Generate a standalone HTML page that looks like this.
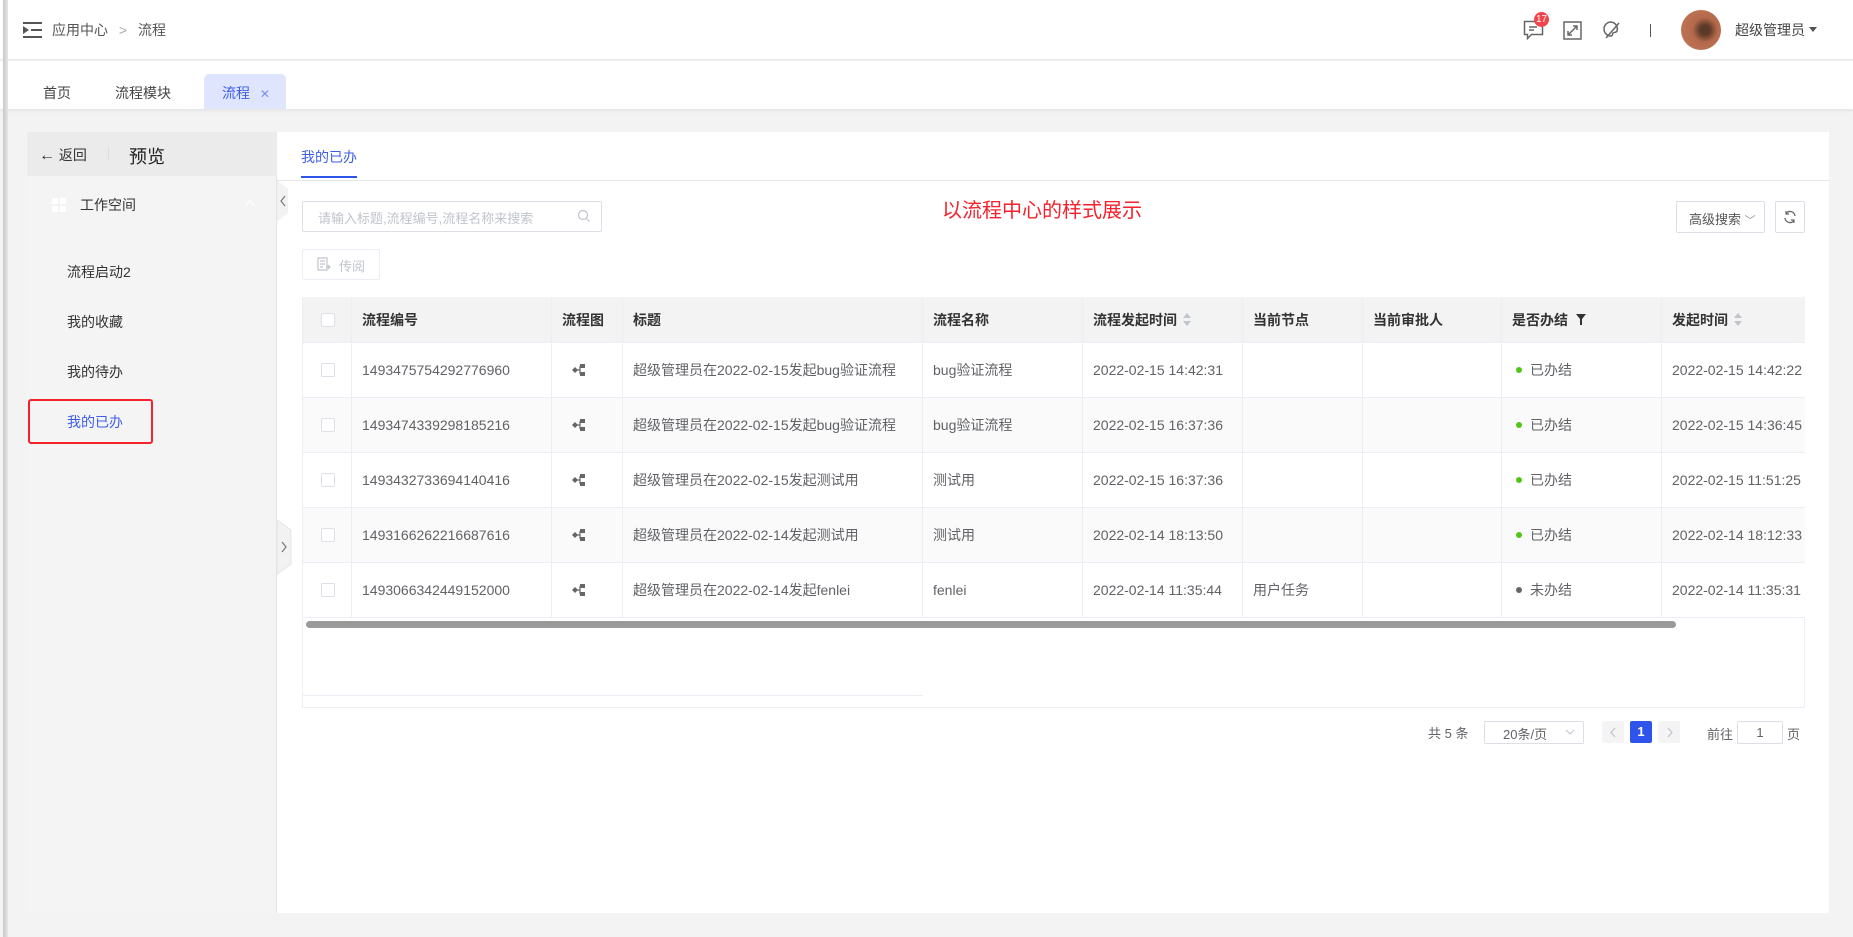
<!DOCTYPE html>
<html><head><meta charset="utf-8"><style>
*{margin:0;padding:0;box-sizing:border-box}
body{width:1853px;height:937px;overflow:hidden;background:#f3f3f3;font-family:"Liberation Sans","Noto Sans CJK SC",sans-serif;font-size:14px;color:#555;position:relative}
.a{position:absolute}
.hdr{left:0;top:0;width:1853px;height:60px;background:#fff;border-bottom:1px solid #e8e8e8}
.tabs{left:0;top:61px;width:1853px;height:48px;background:#fff;box-shadow:0 2px 3px rgba(0,0,0,.06)}
.strip{left:3px;top:0;width:5px;height:937px;background:linear-gradient(90deg,#c8c8cc,#e6e6e8)}
.side{left:27px;top:132px;width:250px;height:781px;background:#f4f4f4;border-right:1px solid #e4e4e4}
.main{left:277px;top:132px;width:1552px;height:781px;background:#fff}
.t{white-space:nowrap}
.th,.td{position:absolute;display:flex;align-items:center;padding-left:10px;border-right:1px solid #ebeef5;border-bottom:1px solid #ebeef5;white-space:nowrap}
.th{background:#f3f3f3;color:#333;font-weight:bold;height:46px;top:297px}
.td{height:55px;color:#606266}
.cb{width:14px;height:14px;border:1px solid #dcdfe6;border-radius:2px;background:#fff}
.dot{display:inline-block;width:6px;height:6px;border-radius:50%;background:#52c41a;margin-right:8px}
.sort{display:inline-block;margin-left:6px;width:8px;height:14px;position:relative}
.sort:before{content:"";position:absolute;left:0;top:0;border:4px solid transparent;border-bottom:5px solid #c0c4cc;border-top:0}
.sort:after{content:"";position:absolute;left:0;top:8px;border:4px solid transparent;border-top:5px solid #c0c4cc;border-bottom:0}
</style></head><body>
<div class="a hdr"></div>
<div class="a tabs"></div>
<div class="a strip"></div>
<svg class="a" style="left:23px;top:22px" width="19" height="16" viewBox="0 0 19 16"><rect x="0" y="0" width="19" height="2" fill="#555"/><rect x="0" y="14" width="19" height="2" fill="#555"/><rect x="8" y="7" width="11" height="2" fill="#555"/><path d="M0 4 L6 8 L0 12Z" fill="#555"/></svg>
<div class="a t" style="left:52px;top:20px;color:#555;font-size:14px">应用中心 <span style="color:#aaa;margin:0 7px">&gt;</span> 流程</div>
<svg class="a" style="left:1523px;top:20px" width="21" height="20" viewBox="0 0 21 20"><path d="M1.5 1.5h18v13h-11l-4 4v-4h-3z" fill="none" stroke="#666" stroke-width="1.5"/><path d="M6 7h8M6 10h5" stroke="#666" stroke-width="1.5"/></svg>
<div class="a" style="left:1534px;top:12px;width:15px;height:15px;border-radius:50%;background:#f0464b;color:#fff;font-size:10px;text-align:center;line-height:15px">17</div>
<svg class="a" style="left:1563px;top:21px" width="19" height="19" viewBox="0 0 19 19"><rect x="1" y="1" width="17" height="17" fill="none" stroke="#666" stroke-width="1.5"/><path d="M5 14l9-9M10 5h4v4M5 10v4h4" fill="none" stroke="#666" stroke-width="1.5"/></svg>
<svg class="a" style="left:1602px;top:20px" width="19" height="20" viewBox="0 0 19 20"><path d="M9 2a7 7 0 1 0 0 14c2 0 1-2 2-3s3 0 4-2a7 7 0 0 0-6-9z" fill="none" stroke="#666" stroke-width="1.5"/><path d="M4 18L17 3" stroke="#666" stroke-width="1.5"/></svg>
<div class="a" style="left:1650px;top:24px;width:1px;height:13px;background:#555"></div>
<div class="a" style="left:1681px;top:10px;width:40px;height:40px;border-radius:50%;background:radial-gradient(circle at 60% 50%,#5a3a28 0,#5a3a28 15%,#b5694a 40%,#c27a5a 100%)"></div>
<div class="a t" style="left:1735px;top:20px;color:#444;font-size:14px">超级管理员</div>
<div class="a" style="left:1809px;top:27px;border:4px solid transparent;border-top:5px solid #555"></div>
<div class="a t" style="left:43px;top:83px;color:#444">首页</div>
<div class="a t" style="left:115px;top:83px;color:#444">流程模块</div>
<div class="a" style="left:204px;top:74px;width:82px;height:35px;background:#dee5fc;border-radius:5px 5px 0 0"></div>
<div class="a t" style="left:222px;top:83px;color:#3f5ee8">流程 <span style="font-size:12px;color:#7a8fe8;margin-left:6px">✕</span></div>
<div class="a side"></div>
<div class="a" style="left:27px;top:132px;width:250px;height:44px;background:#ebebeb"></div>
<div class="a t" style="left:39px;top:145px;color:#333;font-size:14px"><span style="font-size:16px">←</span> 返回</div>
<div class="a" style="left:108px;top:147px;width:1px;height:14px;background:#ddd"></div>
<div class="a t" style="left:129px;top:143px;color:#222;font-size:18px">预览</div>
<svg class="a" style="left:52px;top:198px" width="14" height="14"><rect width="6" height="6" fill="#fff"/><rect x="8" width="6" height="6" fill="#fff"/><rect y="8" width="6" height="6" fill="#fff"/><rect x="8" y="8" width="6" height="6" fill="#fff"/></svg>
<div class="a t" style="left:80px;top:195px;color:#333">工作空间</div>
<svg class="a" style="left:244px;top:199px" width="12" height="8"><path d="M1 7l5-5 5 5" fill="none" stroke="#fff" stroke-width="1.2"/></svg>
<div class="a t" style="left:67px;top:262px;color:#333">流程启动2</div>
<div class="a t" style="left:67px;top:312px;color:#333">我的收藏</div>
<div class="a t" style="left:67px;top:362px;color:#333">我的待办</div>
<div class="a t" style="left:67px;top:412px;color:#3f5ee8">我的已办</div>
<div class="a" style="left:28px;top:399px;width:125px;height:45px;border:2px solid #f5222d;border-radius:3px"></div>
<div class="a main"></div>
<div class="a" style="left:277px;top:180px;width:1552px;height:1px;background:#e4e7ed"></div>
<div class="a t" style="left:301px;top:147px;color:#3f5ee8">我的已办</div>
<div class="a" style="left:301px;top:176px;width:56px;height:2px;background:#2f54eb"></div>
<svg class="a" style="left:277px;top:181px" width="12" height="40"><path d="M0 0h1l10 8v24L1 40H0z" fill="#f2f2f2"/><path d="M8 15l-4 5 4 5" fill="none" stroke="#777" stroke-width="1.2"/></svg>
<svg class="a" style="left:277px;top:520px" width="15" height="54"><path d="M0 0l14 10v34L0 54z" fill="#f2f2f2" stroke="#e4e4e4"/><path d="M5 22l4 5-4 5" fill="none" stroke="#777" stroke-width="1.2"/></svg>
<div class="a" style="left:302px;top:201px;width:300px;height:31px;border:1px solid #dcdfe6;border-radius:2px"></div>
<div class="a t" style="left:318px;top:208px;color:#c0c4cc;font-size:13px">请输入标题,流程编号,流程名称来搜索</div>
<svg class="a" style="left:577px;top:209px" width="14" height="14"><circle cx="6" cy="6" r="4.5" fill="none" stroke="#c0c4cc" stroke-width="1.2"/><path d="M9.5 9.5l3 3" stroke="#c0c4cc" stroke-width="1.2"/></svg>
<div class="a t" style="left:942px;top:194px;color:#f5222d;font-size:20px">以流程中心的样式展示</div>
<div class="a" style="left:302px;top:249px;width:78px;height:31px;border:1px solid #ebeef5;border-radius:2px"></div>
<svg class="a" style="left:317px;top:257px" width="14" height="14"><path d="M1 1h9v12H1z M3 4h5M3 7h5M3 10h3" fill="none" stroke="#c0c4cc" stroke-width="1.2"/><path d="M9 10h4M11 8l2 2-2 2" fill="none" stroke="#c0c4cc" stroke-width="1.2"/></svg>
<div class="a t" style="left:339px;top:256px;color:#c0c4cc;font-size:13px">传阅</div>
<div class="a" style="left:1676px;top:201px;width:89px;height:32px;border:1px solid #dcdfe6;border-radius:2px"></div>
<div class="a t" style="left:1689px;top:209px;color:#555;font-size:13px">高级搜索 <span style="color:#999;font-size:11px">﹀</span></div>
<div class="a" style="left:1775px;top:201px;width:30px;height:32px;border:1px solid #dcdfe6;border-radius:2px"></div>
<svg class="a" style="left:1783px;top:210px" width="14" height="14"><path d="M12 6A5 5 0 0 0 3 3.5M2 8a5 5 0 0 0 9 2.5" fill="none" stroke="#666" stroke-width="1.3"/><path d="M3 1v3h3M11 13v-3H8" fill="none" stroke="#666" stroke-width="1.2"/></svg>
<div class="a" style="left:302px;top:297px;width:1503px;height:411px;border:1px solid #ebeef5;border-top:0"></div>
<div class="th" style="left:302px;width:50px;padding-left:18px;border-left:1px solid #ebeef5"><span class="cb"></span></div>
<div class="th" style="left:352px;width:200px">流程编号</div>
<div class="th" style="left:552px;width:71px">流程图</div>
<div class="th" style="left:623px;width:300px">标题</div>
<div class="th" style="left:923px;width:160px">流程名称</div>
<div class="th" style="left:1083px;width:160px">流程发起时间<span class="sort"></span></div>
<div class="th" style="left:1243px;width:120px">当前节点</div>
<div class="th" style="left:1363px;width:139px">当前审批人</div>
<div class="th" style="left:1502px;width:160px">是否办结 <svg style="margin-left:8px" width="10" height="11"><path d="M0 0h10L6 5v6H4V5z" fill="#333"/></svg></div>
<div class="th" style="left:1662px;width:143px;border-right:0">发起时间<span class="sort"></span></div>
<div id="rows"></div>
<div class="a" style="left:306px;top:621px;width:1370px;height:7px;border-radius:4px;background:#9a9a9a"></div>
<div class="a" style="left:302px;top:695px;width:621px;height:1px;background:#ebeef5"></div>
<div class="a t" style="left:1428px;top:723px;color:#606266;font-size:13px">共 5 条</div>
<div class="a" style="left:1484px;top:721px;width:100px;height:23px;border:1px solid #dcdfe6;border-radius:2px"></div>
<div class="a t" style="left:1503px;top:724px;color:#606266;font-size:13px">20条/页</div>
<svg class="a" style="left:1565px;top:729px" width="10" height="6"><path d="M1 1l4 4 4-4" fill="none" stroke="#c0c4cc"/></svg>
<div class="a" style="left:1602px;top:721px;width:22px;height:22px;background:#f4f4f5;border-radius:2px"></div>
<svg class="a" style="left:1609px;top:727px" width="8" height="11"><path d="M6 1L2 5.5 6 10" fill="none" stroke="#c0c4cc" stroke-width="1.3"/></svg>
<div class="a" style="left:1630px;top:721px;width:22px;height:22px;background:#2f54eb;border-radius:2px;color:#fff;font-size:13px;font-weight:bold;text-align:center;line-height:22px">1</div>
<div class="a" style="left:1658px;top:721px;width:22px;height:22px;background:#f4f4f5;border-radius:2px"></div>
<svg class="a" style="left:1666px;top:727px" width="8" height="11"><path d="M2 1l4 4.5L2 10" fill="none" stroke="#c0c4cc" stroke-width="1.3"/></svg>
<div class="a t" style="left:1707px;top:724px;color:#606266;font-size:13px">前往</div>
<div class="a" style="left:1737px;top:721px;width:46px;height:23px;border:1px solid #dcdfe6;border-radius:2px;text-align:center;line-height:21px;font-size:13px;color:#606266">1</div>
<div class="a t" style="left:1787px;top:724px;color:#606266;font-size:13px">页</div>
<script>
var d=[["1493475754292776960","超级管理员在2022-02-15发起bug验证流程","bug验证流程","2022-02-15 14:42:31","","已办结","2022-02-15 14:42:22"],
["1493474339298185216","超级管理员在2022-02-15发起bug验证流程","bug验证流程","2022-02-15 16:37:36","","已办结","2022-02-15 14:36:45"],
["1493432733694140416","超级管理员在2022-02-15发起测试用","测试用","2022-02-15 16:37:36","","已办结","2022-02-15 11:51:25"],
["1493166262216687616","超级管理员在2022-02-14发起测试用","测试用","2022-02-14 18:13:50","","已办结","2022-02-14 18:12:33"],
["1493066342449152000","超级管理员在2022-02-14发起fenlei","fenlei","2022-02-14 11:35:44","用户任务","未办结","2022-02-14 11:35:31"]];
var h="",icon='<svg width="14" height="14"><path d="M0 7l3-3 3 3-3 3z" fill="#666"/><path d="M5 7h3M8 3v8" stroke="#666" stroke-width="1.2" fill="none"/><rect x="8" y="1" width="5" height="4" fill="#666"/><rect x="8" y="9" width="5" height="4" fill="#666"/></svg>';
d.forEach(function(r,i){var y=343+i*55,bg=i%2?"#fafafa":"#fff";
function c(l,w,t,x){h+='<div class="td" style="top:'+y+'px;left:'+l+'px;width:'+w+'px;background:'+bg+';'+(x||'')+'">'+t+'</div>';}
c(302,50,'<span class="cb"></span>','padding-left:18px;border-left:1px solid #ebeef5');
c(352,200,r[0]);c(552,71,icon,'padding-left:20px');c(623,300,r[1]);c(923,160,r[2]);c(1083,160,r[3]);c(1243,120,r[4]);c(1363,139,'');
c(1502,160,'<span class="dot" style="background:'+(r[5]=="已办结"?"#52c41a":"#666")+'"></span>'+r[5],'padding-left:14px');
c(1662,143,r[6],'border-right:0;overflow:hidden');});
document.getElementById("rows").innerHTML=h;
</script>
</body></html>
